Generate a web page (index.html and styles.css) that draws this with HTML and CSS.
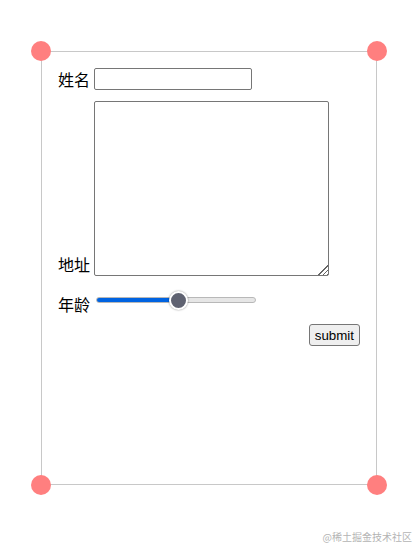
FILE: index.html
```html
<!DOCTYPE html>
<html>
    <head>
        <title>Form</title>
        <meta charset="UTF-8">
        <meta name="viewport" content="width=device-width, initial-scale=1.0">
        <link rel="stylesheet" href="styles.css">
    </head>
    <body>
        <div class="stage">
            <div class="box">
                <form class="form">
                    <div class="row">
                        <label class="label" for="name">姓名</label>
                        <input type="text" id="name" class="text">
                    </div>
                    <div class="row row-end">
                        <label class="label" for="addr">地址</label>
                        <textarea id="addr" class="area"></textarea>
                    </div>
                    <div class="row row-end row-age">
                        <label class="label" for="age">年龄</label>
                        <input type="range" id="age" class="range" min="0" max="100" value="52">
                    </div>
                    <div class="actions">
                        <button type="button" class="button">submit</button>
                    </div>
                </form>

                <span class="dot dot-tl"></span>
                <span class="dot dot-tr"></span>
                <span class="dot dot-bl"></span>
                <span class="dot dot-br"></span>
            </div>
            <div class="mark">@稀土掘金技术社区</div>
        </div>
    </body>
</html>
```

FILE: styles.css
```css
html, body {
    margin: 0;
    padding: 0;
    background-color: #fff;
}
body {
    color: #000;
    font-family: "Noto Sans CJK SC", "Liberation Sans", sans-serif;
}
.stage {
    box-sizing: border-box;
    height: 543px;
    padding: 51px 0 0 41px;
}
.box {
    position: relative;
    width: 334px;
    height: 432px;
    border: 1px solid #c8c8c8;
}
.dot {
    position: absolute;
    z-index: 2;
    width: 20px;
    height: 20px;
    border-radius: 50%;
    background-color: #ff7f7f;
}
.dot-tl { left: -11px; top: -11px; }
.dot-tr { right: -11px; top: -11px; }
.dot-bl { left: -11px; bottom: -11px; }
.dot-br { right: -11px; bottom: -11px; }

.form {
    padding: 16px 16px 0 16px;
}
.row {
    display: flex;
    align-items: center;
    gap: 4px;
}
.row-end {
    align-items: flex-end;
}
.label {
    font-size: 16px;
    line-height: 20px;
    width: 32px;
    flex: none;
}
.text {
    box-sizing: border-box;
    width: 158px;
    height: 22px;
    margin: 0;
    padding: 1px 2px;
    border: 1px solid #767676;
    border-radius: 2px;
}
.row + .row {
    margin-top: 11px;
}
.area {
    box-sizing: border-box;
    width: 235px;
    height: 175px;
    margin: 0 0 -2px 0;
    border: 1px solid #767676;
    border-radius: 2px;
    resize: both;
}
.area::-webkit-resizer {
    background-color: transparent;
    background-image:
        linear-gradient(135deg, #fff 55%, transparent 55%),
        repeating-linear-gradient(135deg, #fff 0 2px, #666 2px 3px);
}
.row + .row-age {
    margin-top: 16px;
}
.range {
    -webkit-appearance: none;
    appearance: none;
    width: 160px;
    height: 20px;
    margin: 0 0 4px 2px;
    background: transparent;
}
.range::-webkit-slider-runnable-track {
    height: 6px;
    border-radius: 3px;
    border: 1px solid #b8b8b8;
    background: linear-gradient(to right, #0063e1 0%, #0063e1 52%, #e6e6e6 52%, #e6e6e6 100%);
    box-sizing: border-box;
}
.range::-webkit-slider-thumb {
    -webkit-appearance: none;
    width: 19px;
    height: 19px;
    margin-top: -7.5px;
    border-radius: 50%;
    background-color: #5f6271;
    border: 2px solid #fff;
    box-shadow: 0 0 2px rgba(0, 0, 0, 0.45);
    box-sizing: border-box;
}
.actions {
    display: flex;
    justify-content: flex-end;
    margin-top: 10px;
}
.button {
    font-family: "Liberation Sans", Arial, sans-serif;
    font-size: 13.33px;
    height: 22px;
    padding: 1px 5px;
    background-color: #efefef;
    border: 1px solid #767676;
    border-radius: 3px;
    color: #000;
}
.mark {
    position: absolute;
    right: 3px;
    top: 529px;
    font-size: 10px;
    color: #b4b4b4;
}
```
